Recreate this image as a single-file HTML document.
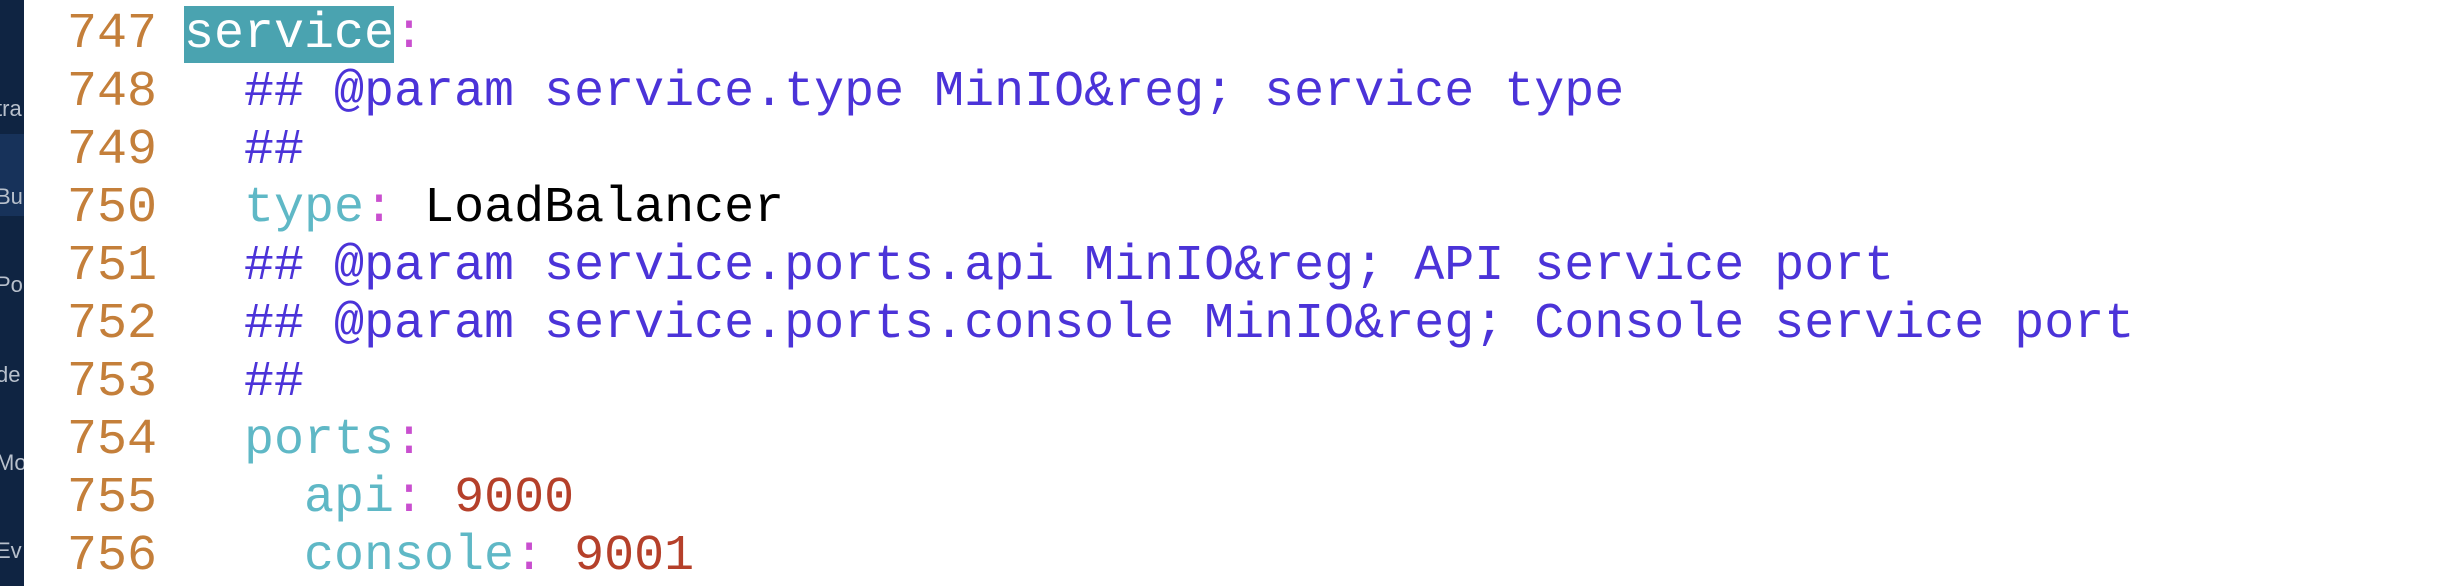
<!DOCTYPE html>
<html><head><style>
html,body{margin:0;padding:0;width:2444px;height:586px;overflow:hidden;background:#fff}
.sb{position:absolute;left:0;top:0;width:24px;height:586px;background:#0f2442;overflow:hidden}
.band{position:absolute;left:0;top:134px;width:24px;height:82px;background:#17325a}
.sb span{position:absolute;left:-4px;font:22px "Liberation Sans",sans-serif;color:#b8c0cc;white-space:nowrap}
.ln{position:absolute;left:67px;font:50px/58px "Liberation Mono",monospace;color:#c47f3a;white-space:pre}
.c{position:absolute;left:184px;font:50px/58px "Liberation Mono",monospace;white-space:pre;color:#000}
.cm{color:#4b33d8}.k{color:#5fb8c6}.p{color:#c94fcf}.n{color:#b5402a}
.hl{background:#4aa3b0;color:#fff}
</style></head><body>
<div class="sb"><div class="band"></div>
<span style="top:96px">tra</span><span style="top:184px">Bu</span><span style="top:272px">Po</span><span style="top:362px">de</span><span style="top:450px">Mo</span><span style="top:538px">Ev</span></div>
<div class="ln" style="top:6px">747</div><div class="c" style="top:6px"><span class="hl">service</span><span class="p">:</span></div>
<div class="ln" style="top:64px">748</div><div class="c cm" style="top:64px">  ## @param service.type MinIO&amp;reg; service type</div>
<div class="ln" style="top:122px">749</div><div class="c cm" style="top:122px">  ##</div>
<div class="ln" style="top:180px">750</div><div class="c" style="top:180px">  <span class="k">type</span><span class="p">:</span> LoadBalancer</div>
<div class="ln" style="top:238px">751</div><div class="c cm" style="top:238px">  ## @param service.ports.api MinIO&amp;reg; API service port</div>
<div class="ln" style="top:296px">752</div><div class="c cm" style="top:296px">  ## @param service.ports.console MinIO&amp;reg; Console service port</div>
<div class="ln" style="top:354px">753</div><div class="c cm" style="top:354px">  ##</div>
<div class="ln" style="top:412px">754</div><div class="c" style="top:412px">  <span class="k">ports</span><span class="p">:</span></div>
<div class="ln" style="top:470px">755</div><div class="c" style="top:470px">    <span class="k">api</span><span class="p">:</span> <span class="n">9000</span></div>
<div class="ln" style="top:528px">756</div><div class="c" style="top:528px">    <span class="k">console</span><span class="p">:</span> <span class="n">9001</span></div>
</body></html>
